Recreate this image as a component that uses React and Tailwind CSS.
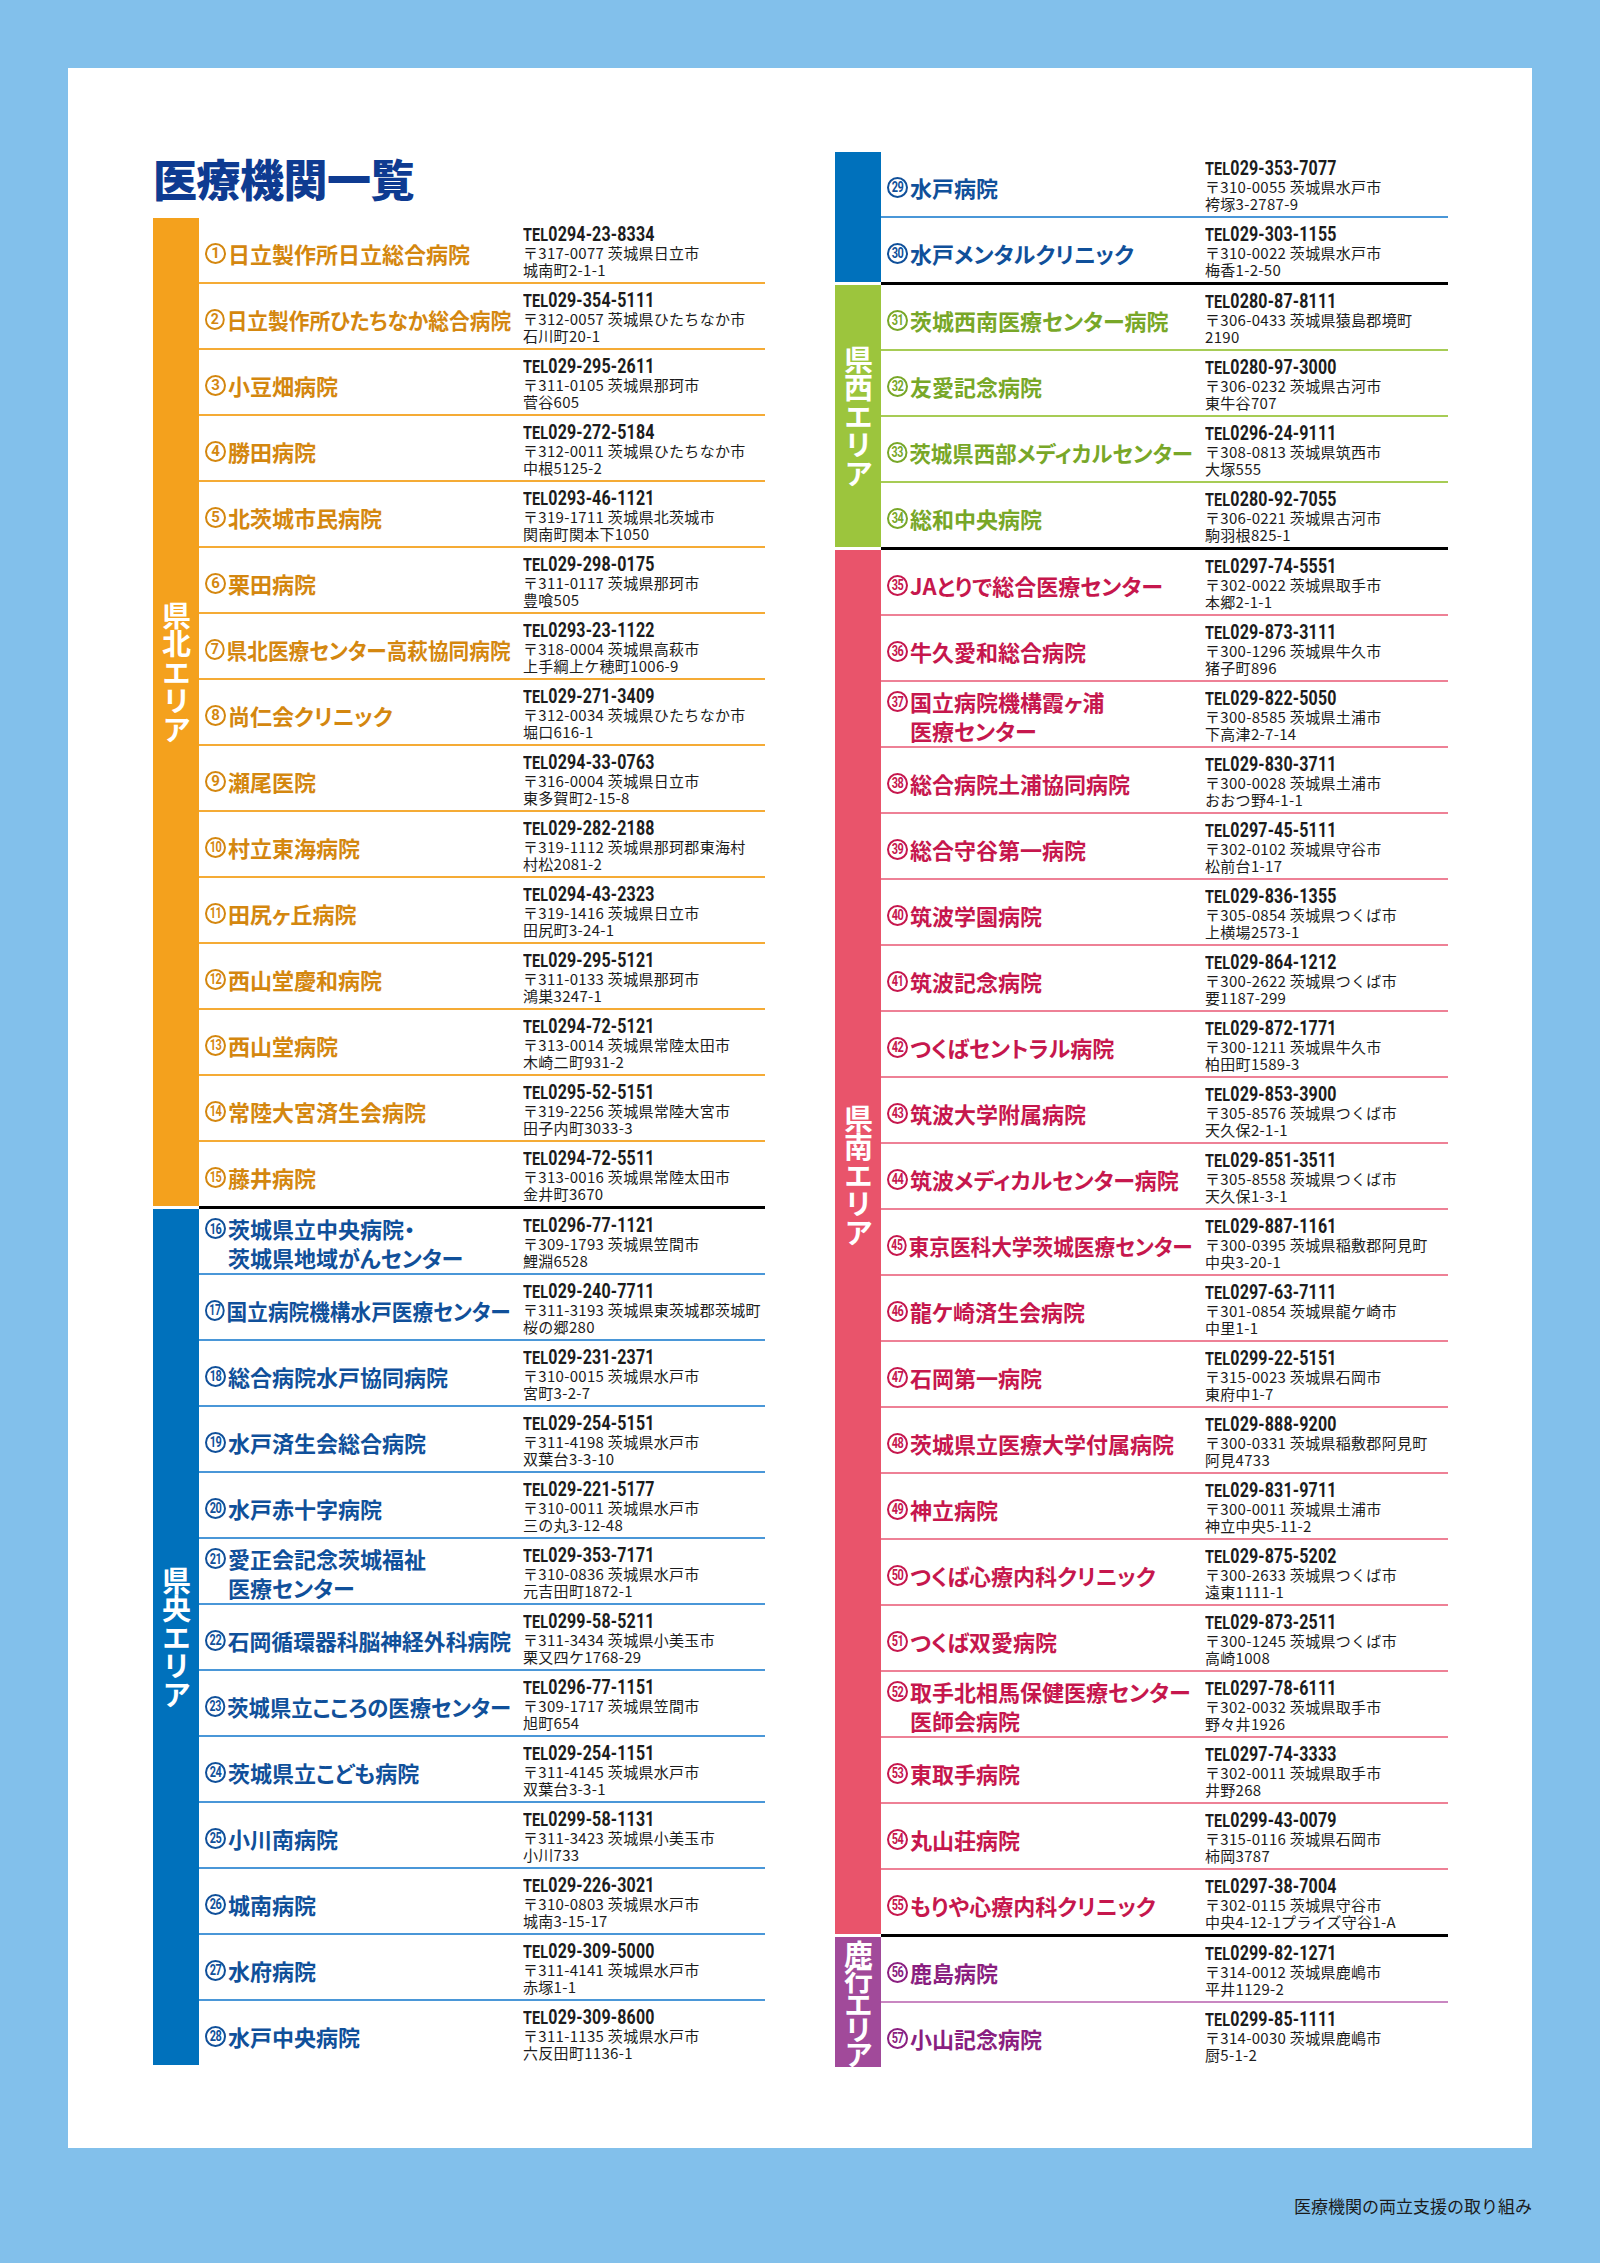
import React, { useLayoutEffect, useRef, useState } from "react";

const COLORS = {
  orange: { bar: "bg-[#f4a11d]", text: "text-[#d4870f]", line: "border-[#f5ab35]" },
  blue: { bar: "bg-[#0071bc]", text: "text-[#10509a]", line: "border-[#4a97d8]" },
  green: { bar: "bg-[#9cc53d]", text: "text-[#78a728]", line: "border-[#a7cc55]" },
  pink: { bar: "bg-[#e9546b]", text: "text-[#c6174d]", line: "border-[#ee8196]" },
  purple: { bar: "bg-[#a14a9a]", text: "text-[#8a1f80]", line: "border-[#c987c1]" },
};

const LEFT = [
  {
    color: "orange",
    label: "県北エリア",
    labelPad: "pb-[80px]",
    labelCls: "tracking-[-0.5px]",
    items: [
      [1, ["日立製作所日立総合病院"], "0294-23-8334", "〒317-0077 茨城県日立市", "城南町2-1-1"],
      [2, ["日立製作所ひたちなか総合病院"], "029-354-5111", "〒312-0057 茨城県ひたちなか市", "石川町20-1"],
      [3, ["小豆畑病院"], "029-295-2611", "〒311-0105 茨城県那珂市", "菅谷605"],
      [4, ["勝田病院"], "029-272-5184", "〒312-0011 茨城県ひたちなか市", "中根5125-2"],
      [5, ["北茨城市民病院"], "0293-46-1121", "〒319-1711 茨城県北茨城市", "関南町関本下1050"],
      [6, ["栗田病院"], "029-298-0175", "〒311-0117 茨城県那珂市", "豊喰505"],
      [7, ["県北医療センター高萩協同病院"], "0293-23-1122", "〒318-0004 茨城県高萩市", "上手綱上ケ穂町1006-9"],
      [8, ["尚仁会クリニック"], "029-271-3409", "〒312-0034 茨城県ひたちなか市", "堀口616-1"],
      [9, ["瀬尾医院"], "0294-33-0763", "〒316-0004 茨城県日立市", "東多賀町2-15-8"],
      [10, ["村立東海病院"], "029-282-2188", "〒319-1112 茨城県那珂郡東海村", "村松2081-2"],
      [11, ["田尻ヶ丘病院"], "0294-43-2323", "〒319-1416 茨城県日立市", "田尻町3-24-1"],
      [12, ["西山堂慶和病院"], "029-295-5121", "〒311-0133 茨城県那珂市", "鴻巣3247-1"],
      [13, ["西山堂病院"], "0294-72-5121", "〒313-0014 茨城県常陸太田市", "木崎二町931-2"],
      [14, ["常陸大宮済生会病院"], "0295-52-5151", "〒319-2256 茨城県常陸大宮市", "田子内町3033-3"],
      [15, ["藤井病院"], "0294-72-5511", "〒313-0016 茨城県常陸太田市", "金井町3670"],
    ],
  },
  {
    color: "blue",
    label: "県央エリア",
    labelPad: "",
    labelCls: "tracking-[-0.5px]",
    items: [
      [16, ["茨城県立中央病院・", "茨城県地域がんセンター"], "0296-77-1121", "〒309-1793 茨城県笠間市", "鯉淵6528"],
      [17, ["国立病院機構水戸医療センター"], "029-240-7711", "〒311-3193 茨城県東茨城郡茨城町", "桜の郷280"],
      [18, ["総合病院水戸協同病院"], "029-231-2371", "〒310-0015 茨城県水戸市", "宮町3-2-7"],
      [19, ["水戸済生会総合病院"], "029-254-5151", "〒311-4198 茨城県水戸市", "双葉台3-3-10"],
      [20, ["水戸赤十字病院"], "029-221-5177", "〒310-0011 茨城県水戸市", "三の丸3-12-48"],
      [21, ["愛正会記念茨城福祉", "医療センター"], "029-353-7171", "〒310-0836 茨城県水戸市", "元吉田町1872-1"],
      [22, ["石岡循環器科脳神経外科病院"], "0299-58-5211", "〒311-3434 茨城県小美玉市", "栗又四ケ1768-29"],
      [23, ["茨城県立こころの医療センター"], "0296-77-1151", "〒309-1717 茨城県笠間市", "旭町654"],
      [24, ["茨城県立こども病院"], "029-254-1151", "〒311-4145 茨城県水戸市", "双葉台3-3-1"],
      [25, ["小川南病院"], "0299-58-1131", "〒311-3423 茨城県小美玉市", "小川733"],
      [26, ["城南病院"], "029-226-3021", "〒310-0803 茨城県水戸市", "城南3-15-17"],
      [27, ["水府病院"], "029-309-5000", "〒311-4141 茨城県水戸市", "赤塚1-1"],
      [28, ["水戸中央病院"], "029-309-8600", "〒311-1135 茨城県水戸市", "六反田町1136-1"],
    ],
  },
];

const RIGHT = [
  {
    color: "blue",
    label: "",
    labelPad: "",
    labelCls: "",
    items: [
      [29, ["水戸病院"], "029-353-7077", "〒310-0055 茨城県水戸市", "袴塚3-2787-9"],
      [30, ["水戸メンタルクリニック"], "029-303-1155", "〒310-0022 茨城県水戸市", "梅香1-2-50"],
    ],
  },
  {
    color: "green",
    label: "県西エリア",
    labelPad: "",
    labelCls: "tracking-[-0.5px]",
    items: [
      [31, ["茨城西南医療センター病院"], "0280-87-8111", "〒306-0433 茨城県猿島郡境町", "2190"],
      [32, ["友愛記念病院"], "0280-97-3000", "〒306-0232 茨城県古河市", "東牛谷707"],
      [33, ["茨城県西部メディカルセンター"], "0296-24-9111", "〒308-0813 茨城県筑西市", "大塚555"],
      [34, ["総和中央病院"], "0280-92-7055", "〒306-0221 茨城県古河市", "駒羽根825-1"],
    ],
  },
  {
    color: "pink",
    label: "県南エリア",
    labelPad: "pb-[134px]",
    labelCls: "tracking-[-0.5px]",
    items: [
      [35, ["JAとりで総合医療センター"], "0297-74-5551", "〒302-0022 茨城県取手市", "本郷2-1-1"],
      [36, ["牛久愛和総合病院"], "029-873-3111", "〒300-1296 茨城県牛久市", "猪子町896"],
      [37, ["国立病院機構霞ヶ浦", "医療センター"], "029-822-5050", "〒300-8585 茨城県土浦市", "下高津2-7-14"],
      [38, ["総合病院土浦協同病院"], "029-830-3711", "〒300-0028 茨城県土浦市", "おおつ野4-1-1"],
      [39, ["総合守谷第一病院"], "0297-45-5111", "〒302-0102 茨城県守谷市", "松前台1-17"],
      [40, ["筑波学園病院"], "029-836-1355", "〒305-0854 茨城県つくば市", "上横場2573-1"],
      [41, ["筑波記念病院"], "029-864-1212", "〒300-2622 茨城県つくば市", "要1187-299"],
      [42, ["つくばセントラル病院"], "029-872-1771", "〒300-1211 茨城県牛久市", "柏田町1589-3"],
      [43, ["筑波大学附属病院"], "029-853-3900", "〒305-8576 茨城県つくば市", "天久保2-1-1"],
      [44, ["筑波メディカルセンター病院"], "029-851-3511", "〒305-8558 茨城県つくば市", "天久保1-3-1"],
      [45, ["東京医科大学茨城医療センター"], "029-887-1161", "〒300-0395 茨城県稲敷郡阿見町", "中央3-20-1"],
      [46, ["龍ケ崎済生会病院"], "0297-63-7111", "〒301-0854 茨城県龍ケ崎市", "中里1-1"],
      [47, ["石岡第一病院"], "0299-22-5151", "〒315-0023 茨城県石岡市", "東府中1-7"],
      [48, ["茨城県立医療大学付属病院"], "029-888-9200", "〒300-0331 茨城県稲敷郡阿見町", "阿見4733"],
      [49, ["神立病院"], "029-831-9711", "〒300-0011 茨城県土浦市", "神立中央5-11-2"],
      [50, ["つくば心療内科クリニック"], "029-875-5202", "〒300-2633 茨城県つくば市", "遠東1111-1"],
      [51, ["つくば双愛病院"], "029-873-2511", "〒300-1245 茨城県つくば市", "高崎1008"],
      [52, ["取手北相馬保健医療センター", "医師会病院"], "0297-78-6111", "〒302-0032 茨城県取手市", "野々井1926"],
      [53, ["東取手病院"], "0297-74-3333", "〒302-0011 茨城県取手市", "井野268"],
      [54, ["丸山荘病院"], "0299-43-0079", "〒315-0116 茨城県石岡市", "柿岡3787"],
      [55, ["もりや心療内科クリニック"], "0297-38-7004", "〒302-0115 茨城県守谷市", "中央4-12-1プライズ守谷1-A"],
    ],
  },
  {
    color: "purple",
    label: "鹿行エリア",
    labelPad: "",
    labelCls: "tracking-[-4px]",
    items: [
      [56, ["鹿島病院"], "0299-82-1271", "〒314-0012 茨城県鹿嶋市", "平井1129-2"],
      [57, ["小山記念病院"], "0299-85-1111", "〒314-0030 茨城県鹿嶋市", "厨5-1-2"],
    ],
  },
];

// long names are squeezed to fit before the TEL column, like the print layout
function Fit({ max, children }) {
  const ref = useRef(null);
  const [scale, setScale] = useState(1);
  useLayoutEffect(() => {
    const w = ref.current.scrollWidth;
    setScale(w > max ? max / w : 1);
  }, [max]);
  return (
    <div ref={ref} className="inline-flex origin-left items-center" style={{ transform: `scaleX(${scale})` }}>
      {children}
    </div>
  );
}

function Num({ n }) {
  const two = n >= 10;
  return (
    <span className="mr-[2px] inline-flex h-[21px] w-[21px] shrink-0 items-center justify-center rounded-full border-2 border-current font-['Roboto',sans-serif] font-bold leading-none">
      {two ? (
        <span className="inline-block scale-x-[0.78] text-[14px] tracking-[-0.5px]">{n}</span>
      ) : (
        <span className="text-[15px]">{n}</span>
      )}
    </span>
  );
}

function Row({ item, c, last }) {
  const [n, name, tel, addr1, addr2] = item;
  return (
    <div className={`flex items-center ${last ? "h-[64px]" : `h-[66px] border-b-2 ${c.line}`}`}>
      <div className={`w-[324px] shrink-0 whitespace-nowrap pl-[6px] text-[22px] font-bold [font-feature-settings:'palt'] ${c.text} ${name.length > 1 ? "leading-[29px]" : "pt-[1px] leading-[30px]"}`}>
        <Fit max={306}>
          <Num n={n} />
          <span>{name[0]}</span>
        </Fit>
        {name[1] && <div className="pl-[23px]">{name[1]}</div>}
      </div>
      <div className="flex flex-col whitespace-nowrap pt-[2px] text-[#1c1c1c]">
        <div className="h-[20px] origin-left scale-x-[0.8] font-['Roboto',sans-serif] text-[20px] font-bold leading-[20px] tracking-[0.2px]">
          <span className="text-[18px]">TEL</span>
          {tel}
        </div>
        <div className="text-[15px] leading-[17px] tracking-[0.3px]">{addr1}</div>
        <div className="text-[15px] leading-[17px] tracking-[0.3px]">{addr2}</div>
      </div>
    </div>
  );
}

function Group({ g, first }) {
  const c = COLORS[g.color];
  return (
    <div className="flex">
      <div className={`flex w-[46px] shrink-0 items-center justify-center ${c.bar} ${first ? "" : "mt-[3px]"} ${g.labelPad}`}>
        {g.label && (
          <span className={`text-[29px] font-bold leading-[29px] text-white [text-orientation:upright] [writing-mode:vertical-rl] ${g.labelCls}`}>
            {g.label}
          </span>
        )}
      </div>
      <div className={`flex-1 ${first ? "" : "border-t-[3px] border-black"}`}>
        {g.items.map((item, i) => (
          <Row key={item[0]} item={item} c={c} last={i === g.items.length - 1} />
        ))}
      </div>
    </div>
  );
}

function Column({ groups }) {
  return (
    <div className="flex flex-col">
      {groups.map((g, i) => (
        <Group key={i} g={g} first={i === 0} />
      ))}
    </div>
  );
}

export default function App() {
  return (
    <div className="h-[2263px] w-[1600px] bg-[#82c0eb] pt-[68px] font-['Noto_Sans_CJK_JP','Noto_Sans',sans-serif]">
      <div className="mx-[68px] h-[2080px] bg-white pl-[85px] pr-[84px] pt-[84px]">
        <div className="grid grid-cols-[612px_613px] gap-x-[70px]">
          <div>
            <h1 className="h-[66px] text-[44px] font-black leading-[52px] tracking-[-0.5px] text-[#0e3b91]">
              医療機関一覧
            </h1>
            <Column groups={LEFT} />
          </div>
          <div>
            <Column groups={RIGHT} />
          </div>
        </div>
      </div>
      <div className="flex h-[115px] items-center justify-end pr-[68px] text-[17px] text-[#1a1a1a]">
        医療機関の両立支援の取り組み
      </div>
    </div>
  );
}
